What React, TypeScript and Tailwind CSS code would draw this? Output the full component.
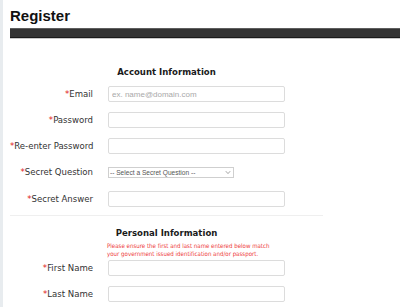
import React from "react";

const labelFont = "font-['DejaVu_Sans_Condensed','DejaVu_Sans',sans-serif]";

function Label({ text }: { text: string }) {
  return (
    <div className={`w-[83px] shrink-0 text-right text-[9.5px] leading-[12px] text-[#333] whitespace-nowrap ${labelFont}`}>
      <span className="text-[#e02020]">*</span>
      {text}
    </div>
  );
}

function TextRow({ label, placeholder, h = "h-[26px]" }: { label: string; placeholder?: string; h?: string }) {
  return (
    <div className={`flex items-center gap-[15px] ${h}`}>
      <Label text={label} />
      <input
        type="text"
        placeholder={placeholder}
        className="w-[177px] h-[16px] rounded-[2px] border border-[#dcdcdc] bg-white px-[3px] text-[8px] font-['Liberation_Sans',sans-serif] text-[#333] placeholder:text-[#a9a9a9] outline-none"
      />
    </div>
  );
}

export default function App() {
  return (
    <div className="flex w-full h-[307px] overflow-hidden bg-white">
      <div className="w-[3px] shrink-0 bg-[#e8ecef]" />
      <div className="flex-1 flex flex-col pl-[7px]">
        <h1 className="mt-[7px] text-[15px] leading-[18px] font-bold text-[#111] font-['Liberation_Sans',sans-serif]">
          Register
        </h1>
        <div className="mt-[3px] h-[12px] border-t border-t-[#5e5e5e] border-b border-b-[#1a1a1a] bg-[#333] shadow-[0_1px_0_#c8c8c8]" />

        <div className="w-[313px] flex flex-col">
          <div className={`mt-[27px] h-[14px] leading-[14px] text-center text-[9.5px] font-bold text-[#1a1a1a] ${labelFont}`}>
            Account Information
          </div>
          <div className="mt-[2px] flex flex-col">
            <TextRow label="Email" placeholder="ex. name@domain.com" />
            <TextRow label="Password" />
            <TextRow label="Re-enter Password" />
            <div className="flex items-center gap-[15px] h-[26px]">
              <Label text="Secret Question" />
              <div className="relative w-[126px] h-[11px] border border-[#cfcfcf] bg-white flex items-center pl-[1px]">
                <span className="text-[6.6px] leading-[9px] text-[#555] font-['Liberation_Sans',sans-serif] whitespace-nowrap">
                  -- Select a Secret Question --
                </span>
                <svg className="absolute right-[2px] top-[2px]" width="6" height="5" viewBox="0 0 6 5">
                  <path d="M0.8 1.2 L3 3.6 L5.2 1.2" fill="none" stroke="#9a9a9a" strokeWidth="0.9" />
                </svg>
              </div>
            </div>
            <TextRow label="Secret Answer" h="h-[27px]" />
          </div>
          <div className="mt-[3px] h-px bg-[#efefef]" />
          <div className={`mt-[10px] h-[14px] leading-[14px] text-center text-[9.5px] font-bold text-[#1a1a1a] ${labelFont}`}>
            Personal Information
          </div>
          <div className={`mt-[2px] pl-[97px] text-[6.1px] leading-[8px] text-[#ee3b3b] whitespace-nowrap ${labelFont}`}>
            <div>Please ensure the first and last name entered below match</div>
            <div>your government issued identification and/or passport.</div>
          </div>
          <div className="-mt-[3px] flex flex-col">
            <TextRow label="First Name" />
            <TextRow label="Last Name" />
          </div>
        </div>
      </div>
    </div>
  );
}
